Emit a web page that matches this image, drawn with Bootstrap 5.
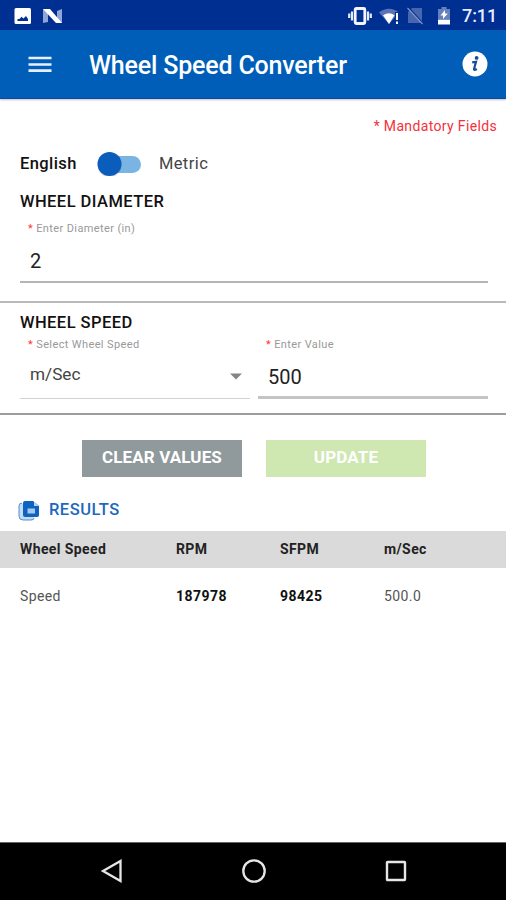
<!DOCTYPE html>
<html lang="en">
<head>
<meta charset="utf-8">
<meta name="viewport" content="width=device-width, initial-scale=1">
<title>Wheel Speed Converter</title>
<link href="https://cdn.jsdelivr.net/npm/bootstrap@5.3.0/dist/css/bootstrap.min.css" rel="stylesheet">
<style>
body{font-family:Roboto,"Noto Sans",sans-serif;color:#111;line-height:1;font-size:16px}
svg{display:block;flex:none}
.screen{height:900px;overflow:hidden;background:#fff}
.status-bar{height:30px;background:#002f92;padding:1px 10px 0 14px}
.wifi-icon{margin-left:6px}
.battery-icon{margin-left:13px}
.clock{font-size:18px;font-weight:500;color:#e6ecff;letter-spacing:-.1px;width:34px;margin-left:11px}
.app-bar{height:69px;background:#005eb8;border-bottom:1px solid #0b46a8;padding:0 18px 0 28px;box-shadow:0 1px 2px rgba(0,0,0,.25)}
.app-title{font-size:25px;font-weight:500;line-height:30px;margin-left:37px;padding-top:3px;letter-spacing:-.18px}
.required-note{height:53px;padding:1px 9px 0 0;font-size:14px;letter-spacing:.35px;color:#f5303c}
.unit-row{height:24px;padding-left:20px}
.unit-label{font-size:16.5px;letter-spacing:.42px}
.unit-active{font-weight:500}
.unit-other{color:#444}
.switch-track{width:44px;height:24px;margin:0 18px 0 20px}
.section-title{font-size:16.5px;font-weight:500;line-height:20px;letter-spacing:.44px;color:#111}
.field-label{font-size:11px;line-height:14px;color:#999;letter-spacing:.38px;padding-left:8px}
.field-label span{color:#f33}
.field-value{font-size:20px;line-height:24px;padding-left:10px;color:#222}
.diameter-block{height:107px;margin:0 18px 0 20px;padding-top:16px;border-bottom:2px solid #b5b5b5}
.diameter-block .field-label{margin-top:10px}
.diameter-block .field-value{margin-top:13px}
.speed-block{height:114px;padding:10px 18px 0 20px;margin-top:18px;border-top:2px solid #b9b9b9;border-bottom:2px solid #9d9d9d}
.speed-field{width:230px;height:66px;padding-top:5px}
.select-line{border-bottom:1px solid #d2d2d2}
.value-line{border-bottom:3px solid #c4c4c4}
.value-line .field-value{margin-top:13px}
.select-row{margin-top:11px}
.select-row .field-value{font-size:17.2px;line-height:22px;color:#444}
.actions{padding:25px 0 0 2px}
.action{width:160px;height:37px;border-radius:0;border:0;font-size:17px;font-weight:700;letter-spacing:.12px;color:#fff;padding:0 0 2px}
.clear-btn,.clear-btn:hover{background:#90999c;color:#fff}
.update-btn,.update-btn:disabled{background:#cfe7b0;color:#fff;opacity:1}
.results-bar{height:54px;padding:13px 0 0 18px}
.results-title{font-size:16.5px;font-weight:500;color:#1d69bd;letter-spacing:.48px;margin-left:9px}
.result-row{display:grid;grid-template-columns:156px 104px 104px 1fr;align-items:center;padding-left:20px;font-size:14px;letter-spacing:.4px}
.result-head{height:37px;background:#dadada;font-weight:700;color:#222;padding-bottom:2px}
.result-data{height:56px;color:#555}
.result-data b{color:#111;letter-spacing:.45px}
.nav-keys{height:58px;background:#000;border-top:1px solid #666;padding:0 97px 2px 100px}
</style>
</head>
<body>
<div class="screen d-flex flex-column">
  <div class="status-bar d-flex align-items-center">
    <svg width="18" height="18" viewBox="0 0 18 18"><rect x=".5" y="1" width="16.500" height="16" rx="1.500" fill="#fff"/><path d="M3.500 14v-2h2l2-2.200 2 1.700 2.500-2.500 2 3v2z" fill="#002f92"/></svg>
    <svg class="ms-2" width="24" height="18" viewBox="0 0 24 18"><path d="M3 2v14l5-1V5zM22 2v14l-5-1V4z" fill="#8fa5d8"/><path d="M3 2h7l12 14h-6z" fill="#fff"/></svg>
    <svg class="ms-auto" width="24" height="20" viewBox="0 0 24 20"><path d="M1.200 7.500v4.500M4 5.500v9M20 5.500v9M22.800 7.500v4.500" stroke="#e4e9ff" stroke-width="2.200"/><rect x="7.200" y="2.500" width="9.600" height="15" rx="1" fill="none" stroke="#f2f4ff" stroke-width="2.800"/></svg>
    <svg class="wifi-icon" width="24" height="20" viewBox="0 0 24 20"><path d="M1 6.500Q11 -1 21 6.500L11 18z" fill="#5873b8"/><path d="M5 9.300Q11 5 16.500 9.300L11 18z" fill="#fff"/><path d="M17 6h5v13h-5z" fill="#002f92"/><path d="M19 7v7M19 15.500v2.500" stroke="#fff" stroke-width="2"/></svg>
    <svg class="ms-1" width="18" height="20" viewBox="0 0 18 20"><path d="M6 2h10v15H2V6z" fill="#4866ad"/><path d="M3 2l14 15.500" stroke="#002f92" stroke-width="1.600"/><path d="M1.500 2l15 16" stroke="#8297ca" stroke-width="1.100"/></svg>
    <svg class="battery-icon" width="14" height="20" viewBox="0 0 14 20"><path d="M4.500 1h5v2H13v10H1V3h3.500z" fill="#6480bd"/><path d="M1 13.500h12V18.500H1z" fill="#fff"/><path d="M8 4L3.500 9.500H6V13l4.800-5.500H8z" fill="#fff"/></svg>
    <span class="clock">7:11</span>
  </div>

  <header class="app-bar d-flex align-items-center text-white">
    <svg width="24" height="18" viewBox="0 0 24 18"><path d="M.5 3h23M.5 9.500h23M.5 15.700h23" stroke="#e8f0ff" stroke-width="2.700"/></svg>
    <h1 class="app-title mb-0">Wheel Speed Converter</h1>
    <svg class="ms-auto" width="26" height="26" viewBox="0 0 26 26"><circle cx="13" cy="13" r="12.500" fill="#fff"/><circle cx="14.600" cy="6.900" r="1.900" fill="#174b9b"/><path d="M10.200 11.400l3.800-.6-1.900 7q-.3 2.100 2.700.2" fill="none" stroke="#174b9b" stroke-width="2.200"/></svg>
  </header>

  <main class="flex-grow-1">
    <div class="required-note d-flex align-items-center justify-content-end">* Mandatory Fields</div>
    <div class="unit-row d-flex align-items-center">
      <span class="unit-label unit-active">English</span>
      <svg class="switch-track" viewBox="0 0 44 24"><rect x="10" y="4" width="34" height="17" rx="8.500" fill="#79b4e3"/><circle cx="12.500" cy="13.300" r="12" fill="#000" opacity=".13"/><circle cx="12.500" cy="12" r="12" fill="#0b5dbb"/></svg>
      <span class="unit-label unit-other">Metric</span>
    </div>

    <section class="diameter-block">
      <h2 class="section-title mb-0">WHEEL DIAMETER</h2>
      <div class="field-label"><span>*</span> Enter Diameter (in)</div>
      <div class="field-value">2</div>
    </section>

    <section class="speed-block">
      <h2 class="section-title mb-0">WHEEL SPEED</h2>
      <div class="d-flex justify-content-between">
        <div class="speed-field select-line">
          <div class="field-label"><span>*</span> Select Wheel Speed</div>
          <div class="select-row d-flex align-items-center">
            <span class="field-value">m/Sec</span>
            <svg class="ms-auto me-2 mt-1" width="12" height="7" viewBox="0 0 12 7"><path d="M0 .5h12L6 6.500z" fill="#858585"/></svg>
          </div>
        </div>
        <div class="speed-field value-line">
          <div class="field-label"><span>*</span> Enter Value</div>
          <div class="field-value">500</div>
        </div>
      </div>
    </section>

    <div class="actions d-flex justify-content-center gap-4">
      <button class="btn action clear-btn">CLEAR VALUES</button>
      <button class="btn action update-btn" disabled>UPDATE</button>
    </div>

    <div class="results-bar d-flex align-items-center">
      <svg width="22" height="22" viewBox="0 0 22 22"><path d="M4 3Q1 3 1 6v10q0 4 4 4h8q3 0 3-2" fill="#c7dbf2" stroke="#5590d0" stroke-width="1"/><path d="M7 1h8l6 5v9q0 2-2 2H7q-2 0-2-2V3q0-2 2-2z" fill="#0e63c0"/><path d="M16 1.500v4.500h4.500z" fill="#b5d2f2"/><path d="M9.500 8.500h7.500v5H9.500z" fill="#a9c9ec"/></svg>
      <span class="results-title">RESULTS</span>
    </div>
    <div class="result-row result-head"><span>Wheel Speed</span><span>RPM</span><span>SFPM</span><span>m/Sec</span></div>
    <div class="result-row result-data"><span>Speed</span><b>187978</b><b>98425</b><span>500.0</span></div>
  </main>

  <footer class="nav-keys d-flex align-items-center justify-content-between">
    <svg width="24" height="26" viewBox="0 0 24 26"><path d="M20.500 3v20L3 13z" fill="none" stroke="#e6e6e6" stroke-width="2.300"/></svg>
    <svg width="26" height="26" viewBox="0 0 26 26"><circle cx="12" cy="13" r="10.700" fill="none" stroke="#e6e6e6" stroke-width="2.300"/></svg>
    <svg width="24" height="26" viewBox="0 0 24 26"><rect x="2" y="4" width="18" height="18" rx=".5" fill="none" stroke="#e6e6e6" stroke-width="2.400"/></svg>
  </footer>
</div>
<script src="https://cdn.jsdelivr.net/npm/bootstrap@5.3.0/dist/js/bootstrap.bundle.min.js"></script>
</body>
</html>
